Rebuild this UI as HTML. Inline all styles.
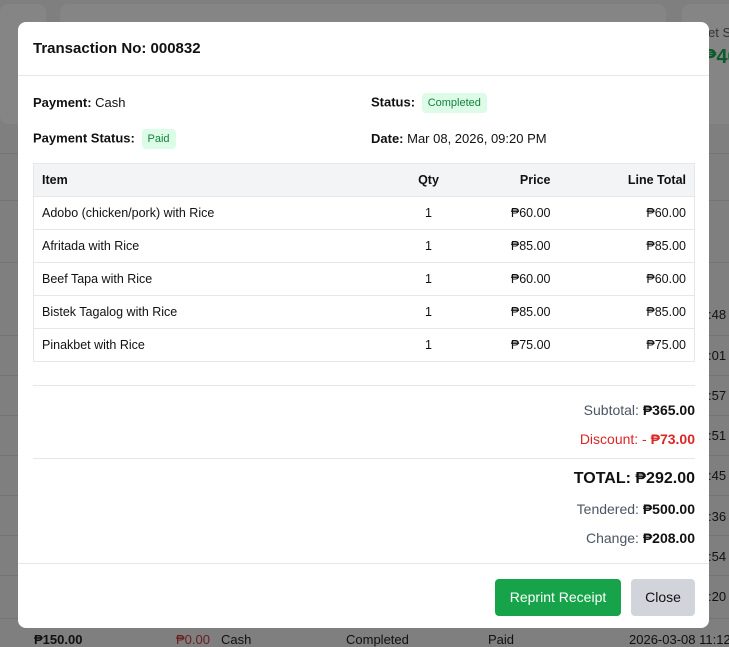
<!DOCTYPE html>
<html><head><meta charset="utf-8"><style>
*{box-sizing:border-box;margin:0;padding:0}
html,body{width:729px;height:647px;overflow:hidden}
body{background:#7f7f7f;font-family:"Liberation Sans",sans-serif;position:relative;color:#111}
.bg{position:absolute;color:#111;font-size:13px;white-space:nowrap}
.card{position:absolute;background:#858585;border-radius:8px}
.hl{position:absolute;left:0;width:729px;height:1px;background:#747474}
.modal{position:absolute;left:18px;top:22px;width:691px;height:606px;background:#fff;border-radius:8px;overflow:hidden}
.hdr{height:54px;border-bottom:1px solid #e5e7eb;padding:18px 15px 0;font-weight:bold;font-size:15px}
.info{position:absolute;font-size:13px;white-space:nowrap}
.badge{display:inline-block;background:#dcfce7;color:#15803d;font-size:11px;padding:4px 6px;border-radius:4px;margin-left:3px;vertical-align:middle}
table{position:absolute;left:15px;top:141px;width:662px;border-collapse:collapse;font-size:12.5px;border:1px solid #e5e7eb}
td,th{border-top:1px solid #e5e7eb;height:33px;padding:0 8px}
th{background:#f3f4f6;font-weight:bold;text-align:left;height:33px}
.c{text-align:center}.r{text-align:right}
.line{position:absolute;left:15px;width:662px;height:1px;background:#e5e7eb}
.tot{position:absolute;right:14px;font-size:14px;color:#4b5563;text-align:right;white-space:nowrap}
.tot b{color:#111}
.btn{position:absolute;top:557px;height:37px;border-radius:4px;font-size:14px;line-height:37px;text-align:center}
</style></head><body>
<div class="card" style="left:0;top:4px;width:46px;height:120px"></div>
<div class="card" style="left:60px;top:4px;width:606px;height:120px"></div>
<div class="card" style="left:682px;top:4px;width:60px;height:120px"></div>
<div class="hl" style="top:153px"></div><div class="hl" style="top:200px"></div><div class="hl" style="top:262px"></div>
<div class="hl" style="top:335px"></div><div class="hl" style="top:375px"></div><div class="hl" style="top:415px"></div><div class="hl" style="top:455px"></div><div class="hl" style="top:495px"></div><div class="hl" style="top:535px"></div><div class="hl" style="top:575px"></div><div class="hl" style="top:618px"></div>
<div class="bg" style="left:708px;top:25px;font-size:13px;color:#333">et S</div>
<div class="bg" style="left:703px;top:46px;font-size:20px;font-weight:bold;color:#0d5a2a">₱40</div>
<div class="bg" style="left:708px;top:307px">:48</div>
<div class="bg" style="left:708px;top:348px">:01</div>
<div class="bg" style="left:708px;top:388px">:57</div>
<div class="bg" style="left:708px;top:428px">:51</div>
<div class="bg" style="left:708px;top:468px">:45</div>
<div class="bg" style="left:708px;top:509px">:36</div>
<div class="bg" style="left:708px;top:549px">:54</div>
<div class="bg" style="left:708px;top:589px">:20</div>
<div class="bg" style="left:34px;top:632px;font-weight:bold">₱150.00</div>
<div class="bg" style="left:176px;top:632px;color:#6b1d1d">₱0.00</div>
<div class="bg" style="left:221px;top:632px">Cash</div>
<div class="bg" style="left:346px;top:632px">Completed</div>
<div class="bg" style="left:488px;top:632px">Paid</div>
<div class="bg" style="left:629px;top:632px">2026-03-08 11:12</div>
<div class="modal">
<div class="hdr">Transaction No: 000832</div>
<div class="info" style="left:15px;top:73px"><b>Payment:</b> Cash</div>
<div class="info" style="left:353px;top:71px"><b>Status:</b> <span class="badge">Completed</span></div>
<div class="info" style="left:15px;top:107px"><b>Payment Status:</b> <span class="badge">Paid</span></div>
<div class="info" style="left:353px;top:109px"><b>Date:</b> Mar 08, 2026, 09:20 PM</div>
<table>
<tr><th>Item</th><th class="c" style="width:60px">Qty</th><th class="r" style="width:100px">Price</th><th class="r" style="width:136px">Line Total</th></tr>
<tr><td>Adobo (chicken/pork) with Rice</td><td class="c">1</td><td class="r">₱60.00</td><td class="r">₱60.00</td></tr>
<tr><td>Afritada with Rice</td><td class="c">1</td><td class="r">₱85.00</td><td class="r">₱85.00</td></tr>
<tr><td>Beef Tapa with Rice</td><td class="c">1</td><td class="r">₱60.00</td><td class="r">₱60.00</td></tr>
<tr><td>Bistek Tagalog with Rice</td><td class="c">1</td><td class="r">₱85.00</td><td class="r">₱85.00</td></tr>
<tr><td>Pinakbet with Rice</td><td class="c">1</td><td class="r">₱75.00</td><td class="r">₱75.00</td></tr>
</table>
<div class="line" style="top:363px"></div>
<div class="tot" style="top:380px">Subtotal: <b>₱365.00</b></div>
<div class="tot" style="top:409px;color:#dc2626">Discount: - <b style="color:#dc2626">₱73.00</b></div>
<div class="line" style="top:436px"></div>
<div class="tot" style="top:448px;font-size:16px;color:#111;font-weight:bold">TOTAL: ₱292.00</div>
<div class="tot" style="top:479px">Tendered: <b>₱500.00</b></div>
<div class="tot" style="top:508px">Change: <b>₱208.00</b></div>
<div style="position:absolute;left:0;top:541px;width:691px;height:1px;background:#e5e7eb"></div>
<div class="btn" style="left:477px;width:126px;background:#16a34a;color:#fff">Reprint Receipt</div>
<div class="btn" style="left:613px;width:64px;background:#d1d5db;color:#111">Close</div>
</div>
</body></html>
